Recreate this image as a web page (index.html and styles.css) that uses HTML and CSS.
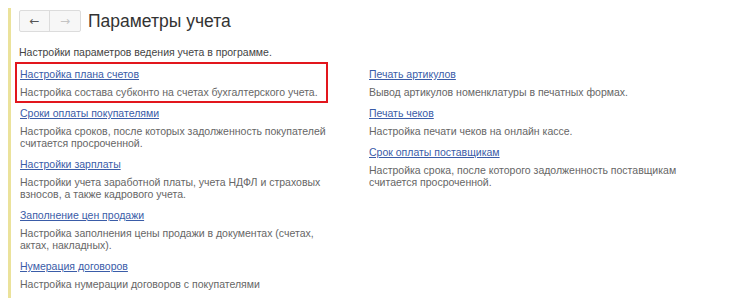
FILE: index.html
```html
<!DOCTYPE html>
<html lang="ru">
<head>
<meta charset="utf-8"/>
<title>Параметры учета</title>
<link rel="stylesheet" href="styles.css">
</head>
<body>
<div class="form">
  <div class="header">
    <div class="nav">
      <button class="nav-btn back">&#8592;</button>
      <button class="nav-btn fwd">&#8594;</button>
    </div>
    <h1>Параметры учета</h1>
  </div>
  <p class="intro">Настройки параметров ведения учета в программе.</p>
  <div class="columns">
    <div class="col left">
      <div class="item marked">
        <a href="#">Настройка плана счетов</a>
        <p>Настройка состава субконто на счетах бухгалтерского учета.</p>
      </div>
      <div class="item">
        <a href="#">Сроки оплаты покупателями</a>
        <p>Настройка сроков, после которых задолженность покупателей считается просроченной.</p>
      </div>
      <div class="item">
        <a href="#">Настройки зарплаты</a>
        <p>Настройки учета заработной платы, учета НДФЛ и страховых взносов, а также кадрового учета.</p>
      </div>
      <div class="item">
        <a href="#">Заполнение цен продажи</a>
        <p>Настройка заполнения цены продажи в документах (счетах, актах, накладных).</p>
      </div>
      <div class="item">
        <a href="#">Нумерация договоров</a>
        <p>Настройка нумерации договоров с покупателями</p>
      </div>
    </div>
    <div class="col right">
      <div class="item">
        <a href="#">Печать артикулов</a>
        <p>Вывод артикулов номенклатуры в печатных формах.</p>
      </div>
      <div class="item">
        <a href="#">Печать чеков</a>
        <p>Настройка печати чеков на онлайн кассе.</p>
      </div>
      <div class="item">
        <a href="#">Срок оплаты поставщикам</a>
        <p>Настройка срока, после которого задолженность поставщикам считается просроченной.</p>
      </div>
    </div>
  </div>
</div>
</body>
</html>
```

FILE: styles.css
```css
body {
  margin: 0;
  background: #fff;
  font-family: "Liberation Sans", Arial, sans-serif;
  color: #555;
}
.form {
  margin: 8px 0 10px 8px;
  border-left: 3px solid #ebe29b;
  padding: 2px 0 0 8px;
}
.header {
  display: flex;
  align-items: center;
  gap: 7px;
  height: 22px;
}
.nav {
  display: flex;
  border: 1px solid #dcdcdc;
  border-radius: 2px;
  background: #f7f7f7;
}
.nav-btn {
  width: 30px;
  height: 20px;
  border: none;
  background: none;
  padding: 0;
  font-size: 12px;
  font-family: "DejaVu Sans", sans-serif;
  line-height: 20px;
}
.nav-btn.back { color: #555; border-right: 1px solid #dcdcdc; }
.nav-btn.fwd { color: #c4c4c4; }
h1 {
  margin: 0;
  font-size: 17.5px;
  font-weight: normal;
  color: #333;
}
.intro {
  margin: 14px 0 9px 0;
  font-size: 10.5px;
  line-height: 12px;
  color: #444;
}
.columns {
  display: grid;
  grid-template-columns: 349px 312px;
}
.col { padding-left: 1px; }
.col.left { width: 308px; }
.item {
  margin-bottom: 8px;
}
.item a {
  display: block;
  width: max-content;
  font-size: 10.5px;
  line-height: 14px;
  color: #3a5ca8;
  text-decoration: underline;
}
.item p {
  margin: 5px 0 0 0;
  font-size: 10.5px;
  line-height: 12px;
  color: #666;
}
.item.marked {
  margin-right: 5px;
  outline: 2px solid #e2161d;
  outline-offset: 3px;
}
```
